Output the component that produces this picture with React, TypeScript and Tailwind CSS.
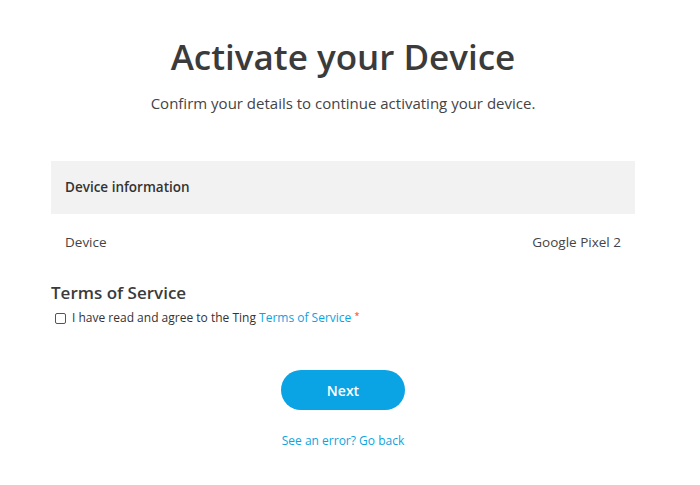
import React from 'react';

export default function App() {
    return (
        <div className="min-h-[485px] bg-white text-[#3a3a3a]" style={{ fontFamily: '"Open Sans", Lato, sans-serif' }}>
            <div className="w-[584px] ml-[51px] pt-[33px]">
                <h1 className="text-center text-[35px] leading-[48px] font-semibold text-[#3b3b3b]">Activate your Device</h1>
                <p className="text-center text-[15px] leading-5 mt-[12px] text-[#444]">Confirm your details to continue activating your device.</p>

                <div className="mt-[48px]">
                    <div className="bg-[#f2f2f2] h-[53px] flex items-center px-[14px]">
                        <span className="text-[13.5px] font-semibold text-[#333]">Device information</span>
                    </div>
                    <div className="h-[56px] flex items-center justify-between px-[14px] text-[13.5px] text-[#444]">
                        <span>Device</span>
                        <span>Google Pixel 2</span>
                    </div>
                </div>

                <h2 className="text-[17px] leading-6 font-semibold text-[#3b3b3b] mt-[11px]">Terms of Service</h2>
                <label className="flex items-center gap-[6px] mt-[4px] ml-[4px] text-[12px] text-[#333]">
                    <span className="w-[11px] h-[11px] border border-[#555] rounded-[2px] bg-white inline-block" />
                    <span>
                        I have read and agree to the Ting <a className="text-[#0ba4e0] font-medium">Terms of Service</a>{' '}
                        <span className="text-[#e53935] text-[9px] align-top">*</span>
                    </span>
                </label>

                <div className="flex flex-col items-center mt-[43px]">
                    <button className="w-[124px] h-[40px] rounded-full bg-[#0aa3e3] text-white text-[14px] font-semibold">Next</button>
                    <a className="mt-[22px] text-[12px] text-[#0ba4e0]">See an error? Go back</a>
                </div>
            </div>
        </div>
    );
}
